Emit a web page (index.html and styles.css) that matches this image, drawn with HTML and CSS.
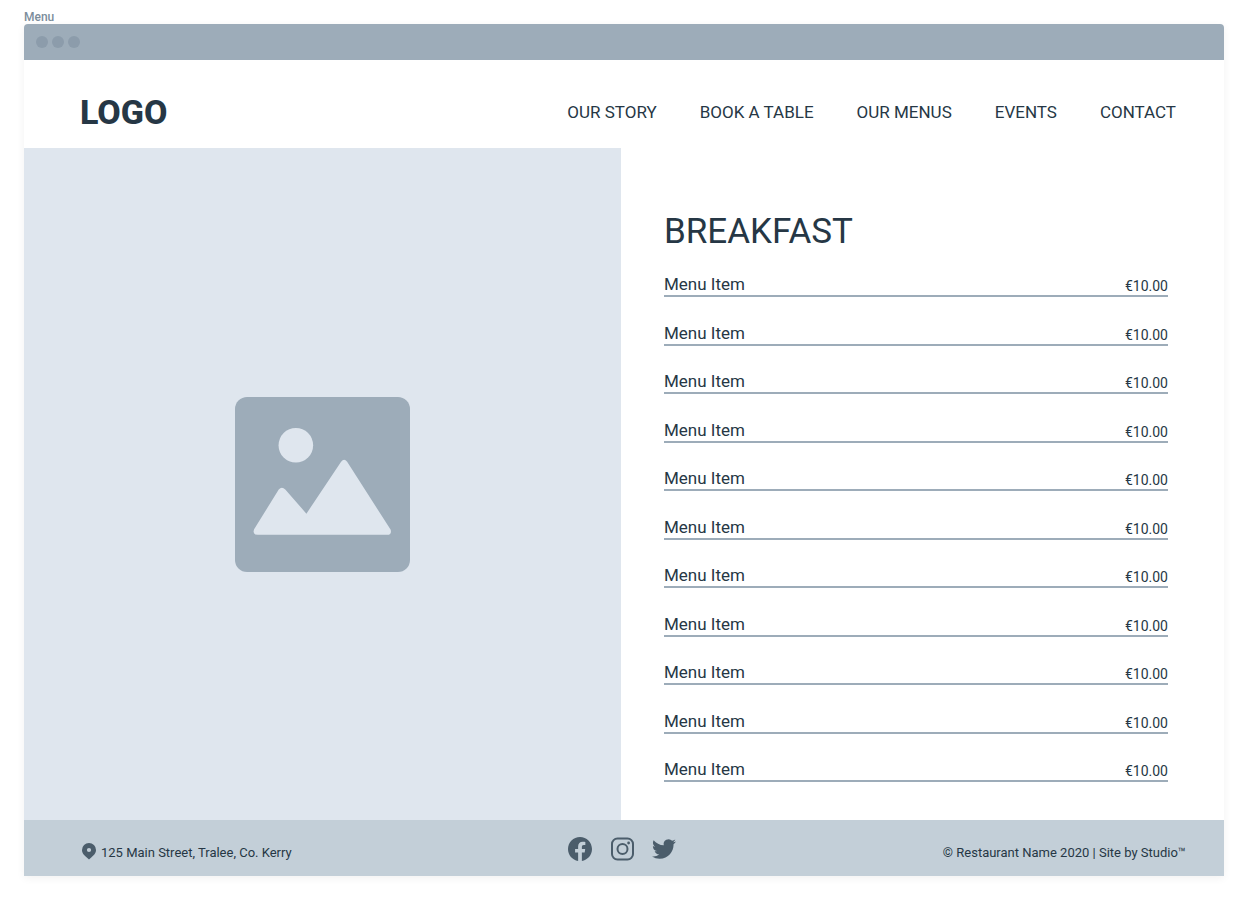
FILE: index.html
```html
<!DOCTYPE html>
<html lang="en">
<head>
<meta charset="utf-8">
<meta name="viewport" content="width=device-width, initial-scale=1">
<title>Menu</title>
<link rel="stylesheet" href="styles.css">
</head>
<body>
<div class="label">Menu</div>
<div class="frame">
  <div class="titlebar"><span class="dot"></span><span class="dot"></span><span class="dot"></span></div>
  <header class="header">
    <a class="logo" href="#">LOGO</a>
    <nav class="nav">
      <a href="#">OUR STORY</a>
      <a href="#">BOOK A TABLE</a>
      <a href="#">OUR MENUS</a>
      <a href="#">EVENTS</a>
      <a href="#">CONTACT</a>
    </nav>
  </header>
  <main class="main">
    <div class="photo">
      <svg class="placeholder" viewBox="0 0 174 174" role="img" aria-label="Image placeholder">
        <rect width="174" height="174" rx="12" fill="#9dacb9"/>
        <circle cx="60.500" cy="48" r="17.200" fill="#dfe6ee"/>
        <path d="M43.500 92Q46.500 88.500 50 92L71 116L105.500 64.500Q108.500 60.500 111.500 64.500L154.800 132Q156 137 151.500 137H22.500Q17 137 19 131.500Z" fill="#dfe6ee"/>
      </svg>
    </div>
    <section class="menu">
      <h1 class="heading">BREAKFAST</h1>
      <ul class="items">
        <li class="item"><span>Menu Item</span><span class="price">€10.00</span></li>
        <li class="item"><span>Menu Item</span><span class="price">€10.00</span></li>
        <li class="item"><span>Menu Item</span><span class="price">€10.00</span></li>
        <li class="item"><span>Menu Item</span><span class="price">€10.00</span></li>
        <li class="item"><span>Menu Item</span><span class="price">€10.00</span></li>
        <li class="item"><span>Menu Item</span><span class="price">€10.00</span></li>
        <li class="item"><span>Menu Item</span><span class="price">€10.00</span></li>
        <li class="item"><span>Menu Item</span><span class="price">€10.00</span></li>
        <li class="item"><span>Menu Item</span><span class="price">€10.00</span></li>
        <li class="item"><span>Menu Item</span><span class="price">€10.00</span></li>
        <li class="item"><span>Menu Item</span><span class="price">€10.00</span></li>
      </ul>
    </section>
  </main>
  <footer class="footer">
    <address class="address">
      <svg class="pin" viewBox="0 0 14 17" aria-hidden="true"><path fill="currentColor" fill-rule="evenodd" d="M7 0a7 7 0 0 0-7 7c0 3.500 2.400 5.400 4.500 7.200L7 16.500l2.500-2.300C11.600 12.400 14 10.500 14 7a7 7 0 0 0-7-7ZM7 4.900a2.100 2.100 0 1 1 0 4.200 2.100 2.100 0 0 1 0-4.200Z"/></svg>
      <span>125 Main Street, Tralee, Co. Kerry</span>
    </address>
    <div class="social">
      <a href="#" aria-label="Facebook"><svg class="icon" viewBox="0 0 24 24"><path fill="currentColor" d="M24 12.070C24 5.410 18.630 0 12 0S0 5.400 0 12.070C0 18.100 4.390 23.100 10.130 24v-8.440H7.080v-3.490h3.040V9.410c0-3.020 1.800-4.700 4.540-4.700 1.310 0 2.680.240 2.680.240v2.970h-1.500c-1.500 0-1.960.930-1.960 1.890v2.260h3.320l-.530 3.500h-2.800V24C19.620 23.100 24 18.100 24 12.070Z"/></svg></a>
      <a href="#" aria-label="Instagram"><svg class="icon" viewBox="0 0 24 24" fill="none" stroke="currentColor" stroke-width="2"><rect x="2" y="1.500" width="21" height="21" rx="5.500"/><circle cx="12.500" cy="12" r="5"/><circle cx="18.600" cy="6" r="1.400" fill="currentColor" stroke="none"/></svg></a>
      <a href="#" aria-label="Twitter"><svg class="icon" viewBox="0 0 24 24"><path fill="currentColor" d="M23.950 4.570a10 10 0 0 1-2.820.770 4.960 4.960 0 0 0 2.160-2.720c-.950.550-2 .950-3.130 1.180a4.920 4.920 0 0 0-8.380 4.480C7.690 8.100 4.070 6.130 1.640 3.160a4.900 4.900 0 0 0-.670 2.480c0 1.710.870 3.210 2.190 4.100a4.900 4.900 0 0 1-2.230-.620v.060a4.920 4.920 0 0 0 3.950 4.830 5 5 0 0 1-2.210.080 4.940 4.940 0 0 0 4.600 3.420A9.870 9.870 0 0 1 0 19.540a14 14 0 0 0 7.550 2.210c9.050 0 14-7.500 14-13.980 0-.210 0-.420-.020-.630a9.940 9.940 0 0 0 2.460-2.550Z"/></svg></a>
    </div>
    <p class="copyright">© Restaurant Name 2020 | Site by Studio™</p>
  </footer>
</div>
</body>
</html>
```

FILE: styles.css
```css
* { box-sizing: border-box; }

body {
  margin: 0;
  min-height: 100vh;
  padding: 10px 28px 26px 24px;
  display: flex;
  flex-direction: column;
  background: #fff;
  color: #263745;
  font-family: Roboto, "Liberation Sans", sans-serif;
}

a { color: inherit; text-decoration: none; }

.label {
  font-size: 12px;
  line-height: 14px;
  font-weight: 500;
  color: #7b8d9b;
}

.frame {
  flex: 1;
  display: flex;
  flex-direction: column;
  border-radius: 4px 4px 0 0;
  box-shadow: 0 2px 8px rgba(0, 0, 0, 0.06);
}

.titlebar {
  height: 36px;
  padding: 0 12px;
  display: flex;
  align-items: center;
  gap: 4px;
  border-radius: 4px 4px 0 0;
  background: #9dacb9;
}

.dot {
  width: 12px;
  height: 12px;
  border-radius: 50%;
  background: #8c9cab;
}

.header {
  padding: 32px 48px 16px 56px;
  display: flex;
  align-items: center;
  justify-content: space-between;
}

.logo {
  font-size: 34px;
  line-height: 40px;
  font-weight: 800;
}

.nav {
  display: flex;
  gap: 43px;
  font-size: 17px;
  line-height: 24px;
}

.main {
  flex: 1;
  display: grid;
  grid-template-columns: 597fr 603fr;
}

.photo {
  display: flex;
  align-items: center;
  justify-content: center;
  background: #dfe6ee;
}

.placeholder { width: 175px; }

.menu {
  padding: 64px 56px 38px 43px;
  display: flex;
  flex-direction: column;
  background: #fff;
}

.heading {
  margin: 0 0 22px;
  font-size: 35px;
  line-height: 40px;
  font-weight: 400;
}

.items {
  flex: 1;
  margin: 0;
  padding: 0;
  list-style: none;
  display: flex;
  flex-direction: column;
  justify-content: space-between;
}

.item {
  display: flex;
  align-items: flex-end;
  justify-content: space-between;
  border-bottom: 2px solid #9dacb9;
  font-size: 17px;
  line-height: 21px;
}

.price {
  font-size: 14px;
  line-height: 18px;
}

.footer {
  min-height: 56px;
  display: grid;
  grid-template-columns: 1fr auto 1fr;
  align-items: center;
  background: #c3cfd8;
  font-size: 13px;
  line-height: 20px;
}

.address {
  padding: 10px 0 0 58px;
  display: flex;
  align-items: flex-start;
  gap: 5px;
  font-style: normal;
}

.pin {
  width: 14px;
  height: 17px;
  color: #4b5d6b;
}

.social {
  padding: 2px 4px 0 0;
  display: flex;
  gap: 18px;
  color: #4b5d6b;
}

.icon { width: 24px; height: 24px; display: block; }

.copyright {
  margin: 0;
  padding: 10px 38px 0 0;
  text-align: right;
}
```
